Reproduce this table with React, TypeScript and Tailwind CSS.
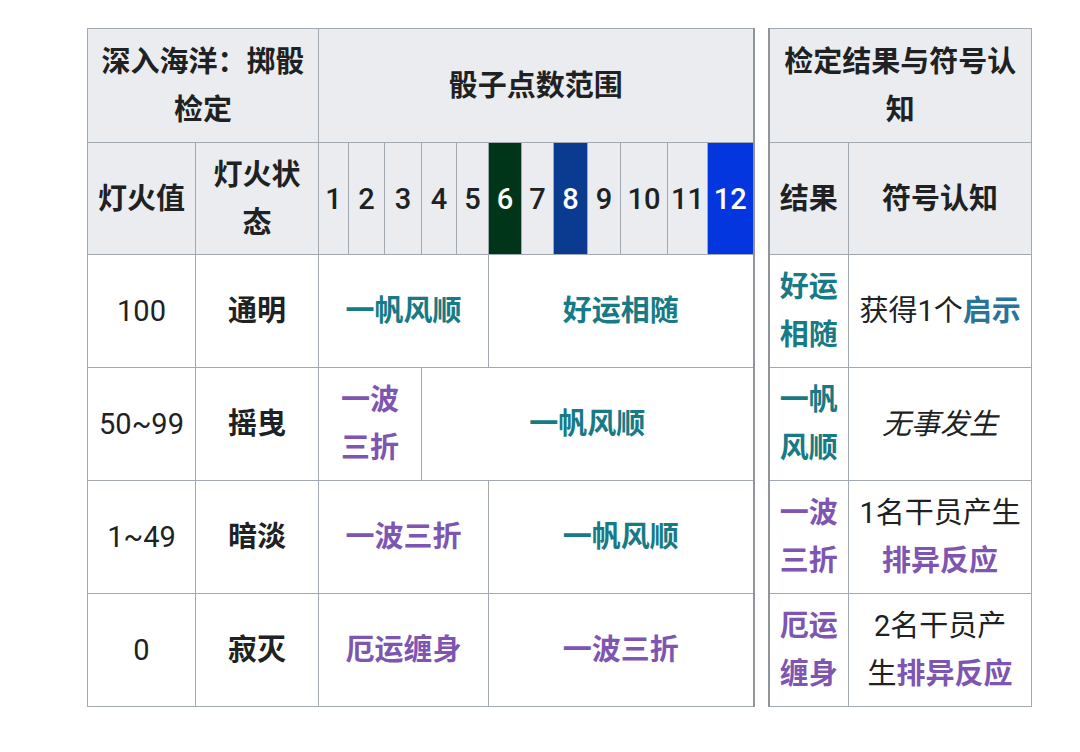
import React from "react";

const teal = "text-[#177a85]";
const purple = "text-[#7e55b1]";

const dice = [
  { n: "1", w: "w-[30px]" },
  { n: "2", w: "w-[36px]" },
  { n: "3", w: "w-[37px]" },
  { n: "4", w: "w-[35px]" },
  { n: "5", w: "w-[32px]" },
  { n: "6", w: "w-[33px]", bg: "bg-[#01351a] text-white" },
  { n: "7", w: "w-[32px]" },
  { n: "8", w: "w-[34px]", bg: "bg-[#0b3a91] text-white" },
  { n: "9", w: "w-[33px]" },
  { n: "10", w: "w-[47px]" },
  { n: "11", w: "w-[40px]" },
  { n: "12", w: "w-[46px]", bg: "bg-[#0436df] text-white" },
];

const th = "border border-[#a2a9b1] bg-[#eaecf0] font-bold text-center align-middle px-[8px]";
const td = "border border-[#a2a9b1] bg-white text-center align-middle px-[8px]";

export default function App() {
  return (
    <div
      className="min-h-[752px] w-[1080px] bg-white pt-[28px] pl-[87px] text-[#202122] text-[29px] leading-[48px]"
      style={{ fontFamily: 'Roboto, "Noto Sans CJK SC", sans-serif' }}
    >
      <table className="table-fixed border-collapse w-[944px]">
        <colgroup>
          <col className="w-[108px]" />
          <col className="w-[123px]" />
          {dice.map((d) => (
            <col key={d.n} className={d.w} />
          ))}
          <col className="w-[15px]" />
          <col className="w-[80px]" />
          <col className="w-[183px]" />
        </colgroup>
        <tbody>
          <tr className="h-[114px]">
            <th colSpan={2} className={th}>
              深入海洋：掷骰检定
            </th>
            <th colSpan={12} className={th}>
              骰子点数范围
            </th>
            <td rowSpan={6} className="border-x-2 border-y-0 border-[#90959b] bg-white p-0" />
            <th colSpan={2} className={th}>
              检定结果与符号认知
            </th>
          </tr>
          <tr className="h-[112px]">
            <th className={th}>灯火值</th>
            <th className={th}>灯火状态</th>
            {dice.map((d) => (
              <th
                key={d.n}
                className={`border border-[#a2a9b1] text-center align-middle px-0 font-medium ${d.bg ?? "bg-[#eaecf0]"}`}
              >
                {d.n}
              </th>
            ))}
            <th className={th}>结果</th>
            <th className={th}>符号认知</th>
          </tr>
          <tr className="h-[113px]">
            <td className={td}>100</td>
            <td className={`${td} font-bold`}>通明</td>
            <td colSpan={5} className={`${td} font-bold ${teal}`}>一帆风顺</td>
            <td colSpan={7} className={`${td} font-bold ${teal}`}>好运相随</td>
            <td className={`${td} font-bold ${teal}`}>
              好运
              <br />
              相随
            </td>
            <td className={td}>
              获得1个<span className="font-bold text-[#2a7399]">启示</span>
            </td>
          </tr>
          <tr className="h-[113px]">
            <td className={td}>50~99</td>
            <td className={`${td} font-bold`}>摇曳</td>
            <td colSpan={3} className={`${td} font-bold ${purple}`}>
              一波
              <br />
              三折
            </td>
            <td colSpan={9} className={`${td} font-bold ${teal}`}>一帆风顺</td>
            <td className={`${td} font-bold ${teal}`}>
              一帆
              <br />
              风顺
            </td>
            <td className={`${td} italic`}>无事发生</td>
          </tr>
          <tr className="h-[113px]">
            <td className={td}>1~49</td>
            <td className={`${td} font-bold`}>暗淡</td>
            <td colSpan={5} className={`${td} font-bold ${purple}`}>一波三折</td>
            <td colSpan={7} className={`${td} font-bold ${teal}`}>一帆风顺</td>
            <td className={`${td} font-bold ${purple}`}>
              一波
              <br />
              三折
            </td>
            <td className={td}>
              1名干员产生
              <br />
              <span className={`font-bold ${purple}`}>排异反应</span>
            </td>
          </tr>
          <tr className="h-[113px]">
            <td className={td}>0</td>
            <td className={`${td} font-bold`}>寂灭</td>
            <td colSpan={5} className={`${td} font-bold ${purple}`}>厄运缠身</td>
            <td colSpan={7} className={`${td} font-bold ${purple}`}>一波三折</td>
            <td className={`${td} font-bold ${purple}`}>
              厄运
              <br />
              缠身
            </td>
            <td className={td}>
              2名干员产
              <br />
              生<span className={`font-bold ${purple}`}>排异反应</span>
            </td>
          </tr>
        </tbody>
      </table>
    </div>
  );
}
